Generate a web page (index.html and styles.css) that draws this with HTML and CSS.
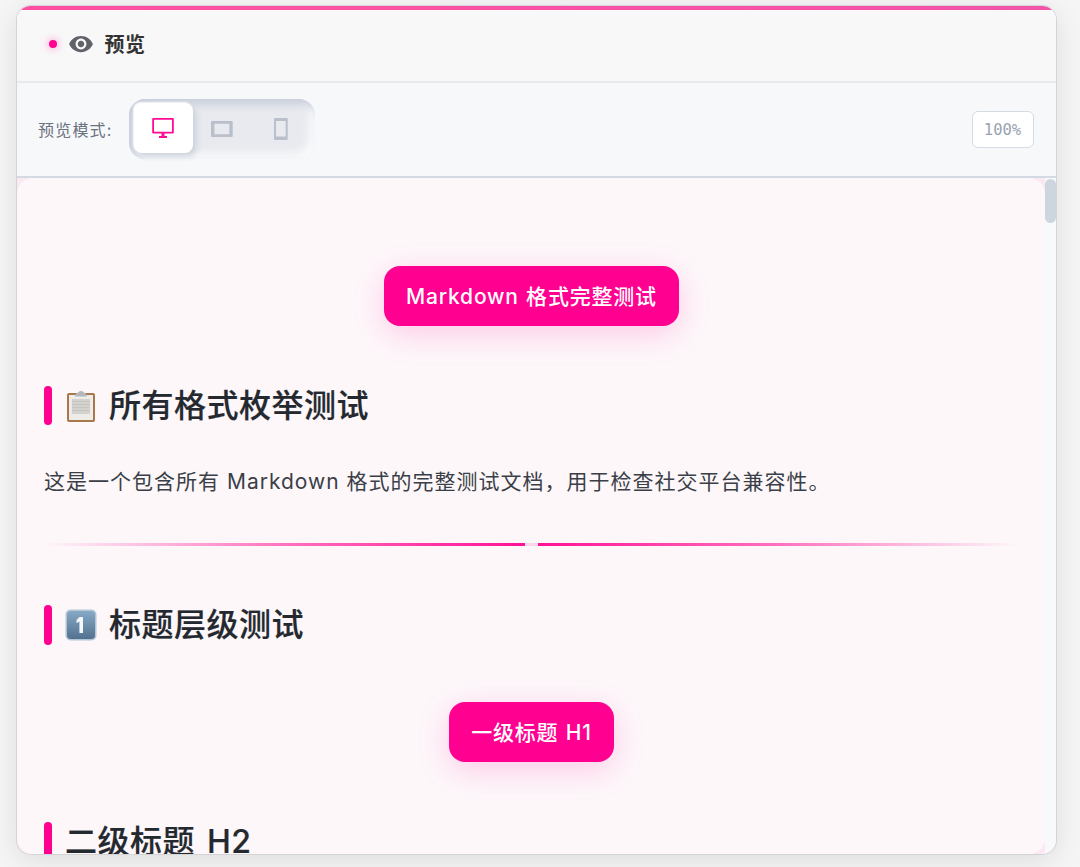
FILE: index.html
```html
<!DOCTYPE html>
<html lang="zh">
<head>
<meta charset="utf-8">
<title>预览</title>
<link rel="stylesheet" href="styles.css">
</head>
<body>
<main class="card">
  <div class="topline"></div>
  <header class="head">
    <span class="dot"></span>
    <svg class="eye" viewBox="0 0 24 24" width="26" height="26"><path fill="#5f6368" d="M12 4.500C7 4.500 2.730 7.610 1 12c1.730 4.390 6 7.500 11 7.500s9.270-3.110 11-7.500c-1.730-4.390-6-7.500-11-7.500zM12 17c-2.760 0-5-2.240-5-5s2.240-5 5-5 5 2.240 5 5-2.240 5-5 5zm0-8c-1.660 0-3 1.340-3 3s1.340 3 3 3 3-1.340 3-3-1.340-3-3-3z"/></svg>
    <span class="head-title">预览</span>
  </header>
  <div class="toolbar">
    <div class="mode">
      <span class="mode-label">预览模式:</span>
      <div class="switch">
        <button class="sw active">
          <svg viewBox="0 0 24 24" width="24" height="24"><path fill="#ff0a95" fill-rule="evenodd" d="M2.200 2h19.600a1 1 0 0 1 1 1v13.500a1 1 0 0 1-1 1H2.200a1 1 0 0 1-1-1V3a1 1 0 0 1 1-1zM3 3.800v11.900h18V3.800H3zM10.500 17.500h3V20H16v2H8v-2h2.500z"/></svg>
        </button>
        <button class="sw">
          <svg viewBox="0 0 24 24" width="24" height="24"><path fill="#b9c0cc" fill-rule="evenodd" d="M2 5h19.700a1 1 0 0 1 1 1v14a1 1 0 0 1-1 1H2a1 1 0 0 1-1-1V6a1 1 0 0 1 1-1zm2.400 2.700v10.600h14.900V7.700H4.400z"/></svg>
        </button>
        <button class="sw">
          <svg viewBox="0 0 24 24" width="24" height="24"><path fill="#b9c0cc" fill-rule="evenodd" d="M6 2h11.700a1 1 0 0 1 1 1v20a1 1 0 0 1-1 1H6a1 1 0 0 1-1-1V3a1 1 0 0 1 1-1zm1 3v15.500h9.700V5H7z"/></svg>
        </button>
      </div>
    </div>
    <span class="zoom">100%</span>
  </div>
  <section class="preview">
    <div class="bar"><div class="thumb"></div></div>
    <article class="doc">
      <div class="center"><h1 class="h1">Markdown 格式完整测试</h1></div>
      <h2 class="h2 h2a"><svg class="emoji" viewBox="0 0 32 32" width="32" height="32"><rect x="2" y="3" width="28" height="29" rx="2" fill="#a8784a"/><rect x="4" y="5" width="24" height="25" fill="#eeece8"/><path fill="#d3d2cf" d="M7 9h18v15H7z"/><path fill="#c6c5c2" d="M7 11h18v1H7zM7 14h18v1H7zM7 17h18v1H7zM7 20h18v1H7z"/><path fill="#b4b8bd" d="M11 3.500c2-.5 3-2.500 5-2.500s3 2 5 2.500l1 3H10z"/></svg><span class="h2-text">所有格式枚举测试</span></h2>
      <p class="para">这是一个包含所有 Markdown 格式的完整测试文档&#xFF0C;用于检查社交平台兼容性。</p>
      <div class="rule"><span class="rule-gap"></span></div>
      <h2 class="h2 h2b"><svg class="emoji" viewBox="0 0 32 32" width="32" height="32"><defs><linearGradient id="kc" x1="0" y1="0" x2="0" y2="1"><stop offset="0" stop-color="#86a9c6"/><stop offset="1" stop-color="#52718f"/></linearGradient></defs><rect x="0.500" y="0.500" width="31" height="31" rx="5" fill="#b3c6d6"/><rect x="2" y="2" width="28" height="28" rx="4" fill="url(#kc)"/><path fill="#f4f6f8" d="M14.500 8h3.500v16h-3.600V12.400l-2.900 1.800V11z"/></svg><span class="h2-text">标题层级测试</span></h2>
      <div class="center second"><h1 class="h1">一级标题 H1</h1></div>
      <h2 class="h2 h2c"><span class="h2-text">二级标题 H2</span></h2>
    </article>
  </section>
</main>
</body>
</html>
```
FILE: styles.css
```css
* { box-sizing: border-box; }
html, body { margin: 0; height: 867px; overflow: hidden; }
body {
  background: #f5f5f5;
  padding: 6px 24px 13px 17px;
  font-family: Inter, "Noto Sans CJK SC", sans-serif;
  color: #24292f;
}
.card {
  position: relative;
  height: 848px;
  border-radius: 14px;
  overflow: hidden;
  background: #f8f9fa;
  display: flex;
  flex-direction: column;
  box-shadow: 0 0 0 1px #d4d4d7, 0 6px 28px rgba(0,0,0,.1);
}
.topline {
  position: absolute; left: 0; right: 0; top: 0; height: 4px;
  background: linear-gradient(90deg, #ff4fa3, #f354a8);
  z-index: 2;
}
.head {
  height: 77px;
  flex: none;
  display: flex;
  align-items: center;
  padding: 0 0 0 32px;
  background: #f8f8f9;
  border-bottom: 2px solid #e9eaeb;
}
.dot {
  width: 8px; height: 8px; border-radius: 50%;
  background: #ff0090;
  box-shadow: 0 0 8px rgba(255,0,144,.5);
  margin-right: 10.500px;
}
.eye { margin-right: 11px; }
.head-title { font-size: 20px; font-weight: 600; color: #333; letter-spacing: .5px; }
.toolbar {
  height: 95px;
  flex: none;
  display: flex;
  align-items: center;
  justify-content: space-between;
  padding: 0 22px 1px 21px;
  background: #f7f8fa;
  border-bottom: 2px solid #d3dae2;
}
.mode { display: flex; align-items: center; gap: 16px; }
.mode-label { font-size: 16px; color: #6b7280; letter-spacing: 1.200px; }
.switch {
  display: flex;
  width: 186px; height: 60px;
  padding: 4px 0 6px 5px;
  border-radius: 16px;
  background: #e8eaef;
  box-shadow: inset 5px 5px 10px #c5ccd9, inset -5px -5px 10px #fdfdfe;
}
.sw {
  width: 59px; height: 50px;
  border: 0; padding: 0; background: transparent;
  border-radius: 8px;
  display: flex; align-items: center; justify-content: center;
}
.sw.active {
  background: #fff;
  box-shadow: 3px 3px 6px #c9cfda, -1px -1px 2px #fff;
}
.zoom {
  width: 62px; height: 37px;
  display: flex; align-items: center; justify-content: center;
  padding-top: 1px;
  padding-right: 1px;
  background: #fff;
  border: 1px solid #d5dbe3;
  border-radius: 6px;
  font: 15.500px "DejaVu Sans Mono", monospace;
  color: #9aa3af;
}
.preview {
  flex: 1;
  min-height: 0;
  position: relative;
  background: #fce8f3;
  overflow: hidden;
  border-radius: 0 0 14px 14px;
}
.doc {
  height: 100%;
  width: 1028px;
  padding: 88px 27px 0;
  background: #fdf7fa;
  border-radius: 16px;
  overflow: hidden;
}
.bar {
  position: absolute; right: 0; top: 0; bottom: 0; width: 11px;
  background: #f8f9fb;
}
.thumb { width: 11px; height: 44px; margin-top: 1px; border-radius: 6px; background: #cdd5df; }
.center { display: flex; justify-content: center; padding-left: 1px; }
.h1 {
  margin: 0;
  height: 60px;
  display: flex; align-items: center;
  background: #ff0090;
  color: #fff;
  border-radius: 16px;
  font-size: 21px; font-weight: 500;
  padding: 0 22px 3px;
  letter-spacing: .8px;
  word-spacing: 1px;
  white-space: nowrap;
  box-shadow: 0 8px 32px rgba(255,0,144,.18);
}
.second { margin-top: 57px; }
.h2 {
  margin: 0;
  position: relative;
  display: flex; align-items: center;
  height: 39px;
  font-size: 32px; font-weight: 500;
  color: #24292f;
  padding-left: 21px;
  letter-spacing: .5px;
  word-spacing: 3px;
  -webkit-text-stroke: .2px #24292f;
}
.h2::before {
  content: "";
  position: absolute; left: 0; top: 0;
  width: 7.500px; height: 39px; border-radius: 4px;
  background: #ff0090;
}
.h2-text { position: relative; top: -3px; }
.emoji { margin-right: 12px; flex: none; }
.h2a { margin-top: 60px; }
.h2b { margin-top: 59px; height: 40px; }
.h2b::before { height: 40px; }
.h2c { margin-top: 60px; }
.para { margin: 41px 0 0; font-size: 21px; line-height: 32px; color: #3a3f47; letter-spacing: 1px; }
.rule {
  position: relative;
  height: 3px; margin-top: 45px;
  background: linear-gradient(90deg, transparent, rgba(255,20,150,.6) 25%, #ff0f96 50%, rgba(255,20,150,.6) 75%, transparent);
}
.rule-gap {
  position: absolute; left: 50%; top: 0;
  width: 13px; height: 3px; margin-left: -6px;
  background: #fcd6e9;
}
```
